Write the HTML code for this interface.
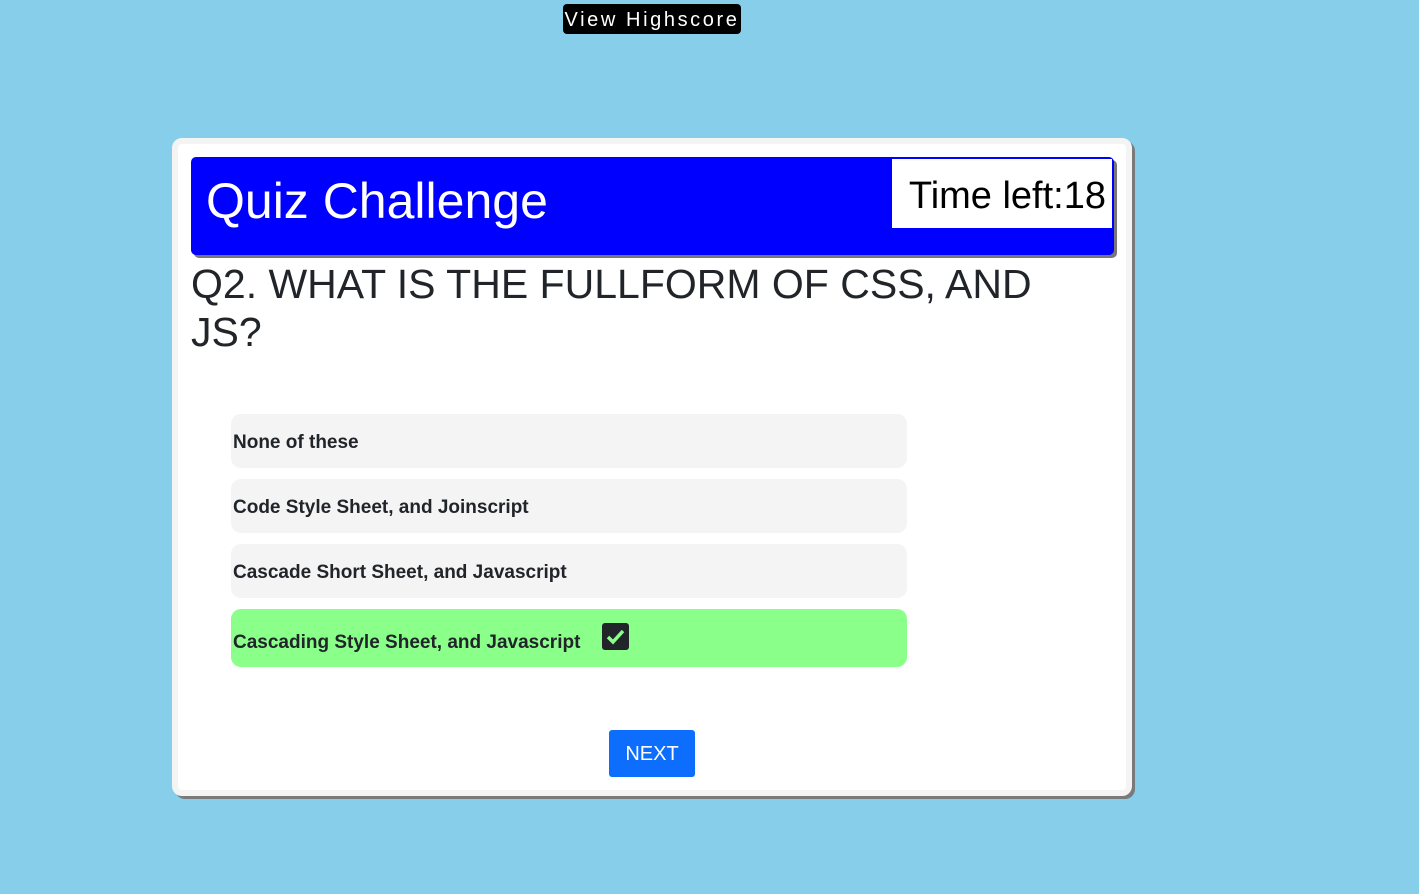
<!DOCTYPE html>
<html><head><style>
body{margin:0;width:1419px;height:894px;background:#87ceeb;font-family:"Liberation Sans",sans-serif;position:relative;overflow:hidden}
.hs{position:absolute;left:563px;top:4px;width:178px;height:30px;background:#000;color:#fff;border-radius:4px;font-size:20px;line-height:32px;text-align:center;letter-spacing:2.6px;white-space:nowrap}
.card{position:absolute;left:172px;top:138px;width:948px;height:646px;background:#fff;border:6px solid #f4f4f4;border-radius:10px;box-shadow:3px 3px 0 #7a7a7a}
.hdr{position:absolute;left:13px;top:13px;width:923px;height:98px;background:#0000ff;border-radius:5px;box-shadow:3px 3px 0 #777}
.hdr h1{margin:0;position:absolute;left:15px;top:16px;color:#fff;font-weight:normal;font-size:50px;line-height:56px}
.time{position:absolute;left:701px;top:2px;width:220px;height:69px;background:#fff;font-size:38px;line-height:74px;text-align:right;padding-right:6px;box-sizing:border-box;color:#000;white-space:nowrap}
.q{position:absolute;left:13px;top:116px;width:870px;font-size:41px;line-height:48px;color:#212529;margin:0;font-weight:normal}
.a{position:absolute;left:53px;width:676px;height:54px;background:#f4f4f4;border-radius:10px;font-size:19px;font-weight:bold;color:#212529;line-height:58px;padding-left:2px;box-sizing:border-box}
.g{background:#8aff8a;height:58px;line-height:68px}
.chk{display:inline-block;width:27px;height:27px;background:#212529;border-radius:3px;vertical-align:top;margin:14px 0 0 22px;position:relative}
.chk svg{display:block;position:absolute;left:0;top:0}
.next{position:absolute;left:431px;top:586px;width:86px;height:47px;background:#0d6efd;color:#fff;border-radius:3px;font-size:20px;line-height:49px;text-align:center}
</style></head><body>
<div class="hs">View Highscore</div>
<div class="card">
<div class="hdr"><h1>Quiz Challenge</h1><div class="time">Time left:18</div></div>
<h2 class="q">Q2. WHAT IS THE FULLFORM OF CSS, AND JS?</h2>
<div class="a" style="top:270px">None of these</div>
<div class="a" style="top:335px">Code Style Sheet, and Joinscript</div>
<div class="a" style="top:400px">Cascade Short Sheet, and Javascript</div>
<div class="a g" style="top:465px">Cascading Style Sheet, and Javascript<span class="chk"><svg width="27" height="27" viewBox="0 0 27 27"><path d="M6 14l5 5 10-11" stroke="#8aff8a" stroke-width="3.5" fill="none"/></svg></span></div>
<div class="next">NEXT</div>
</div>
</body></html>
